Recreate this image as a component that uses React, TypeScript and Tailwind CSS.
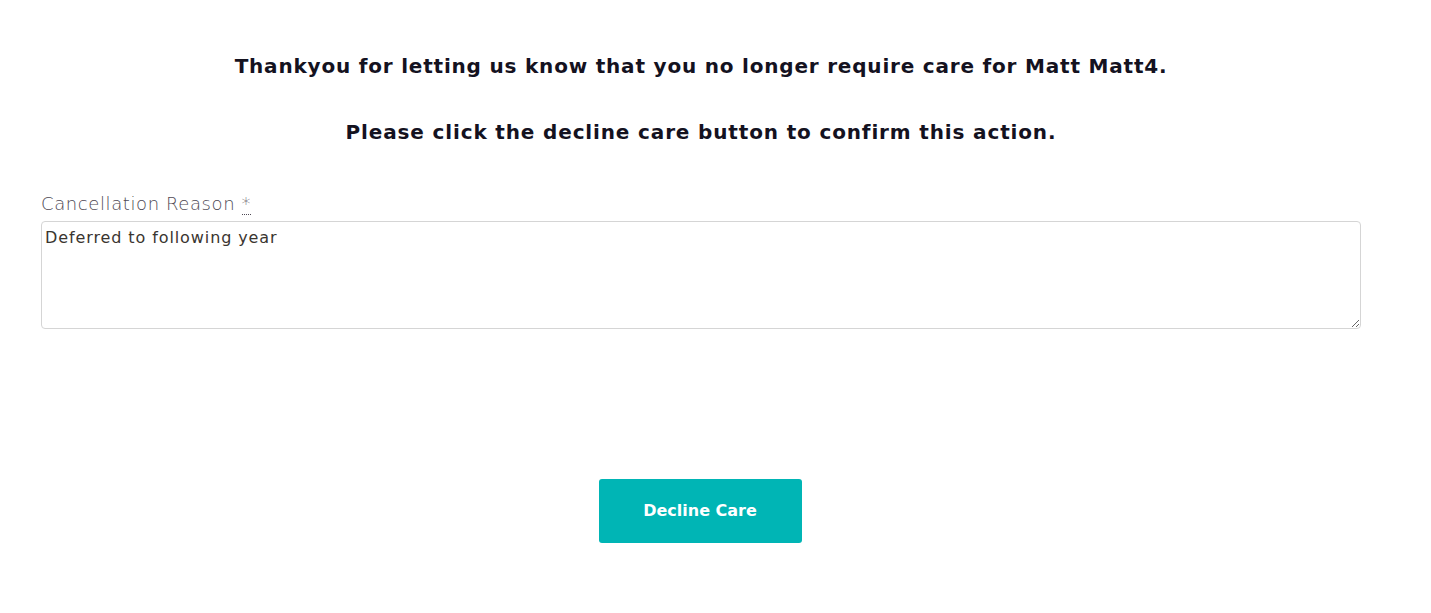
import { useState } from 'react'

export default function App() {
  const [reason, setReason] = useState('Deferred to following year')

  return (
    <div className="min-h-screen bg-white" style={{ fontFamily: '"DejaVu Sans", "Open Sans", sans-serif' }}>
      <div className="w-[1320px] ml-[41px] pt-[50px]">
        {/* Messages */}
        <h2 className="text-center text-[20px] font-bold tracking-[0.8px] text-[#14121f] leading-[32px]">
          Thankyou for letting us know that you no longer require care for Matt Matt4.
        </h2>
        <h2 className="text-center text-[20px] font-bold tracking-[0.85px] text-[#14121f] leading-[32px] mt-[34px]">
          Please click the decline care button to confirm this action.
        </h2>

        {/* Reason */}
        <div className="mt-[44px]">
          <label className="block text-[18px] font-light tracking-[0.6px] text-[#4e4954] leading-[24px] mb-[5px]">
            Cancellation Reason{' '}
            <abbr title="required" className="no-underline border-b border-dotted border-[#4e4954]">*</abbr>
          </label>
          <textarea
            value={reason}
            onChange={e => setReason(e.target.value)}
            className="block w-full h-[108px] rounded-[4px] border border-[#d5d5d5] px-[3px] py-[5px] text-[16px] tracking-[0.9px] text-[#3a3530] leading-[22px] outline-none"
          />
        </div>

        {/* Action */}
        <div className="flex justify-center pr-[2px] mt-[150px]">
          <button className="w-[203px] h-[64px] rounded-[3px] bg-[#00b5b5] text-white text-[16px] font-bold">
            Decline Care
          </button>
        </div>
      </div>
    </div>
  )
}
